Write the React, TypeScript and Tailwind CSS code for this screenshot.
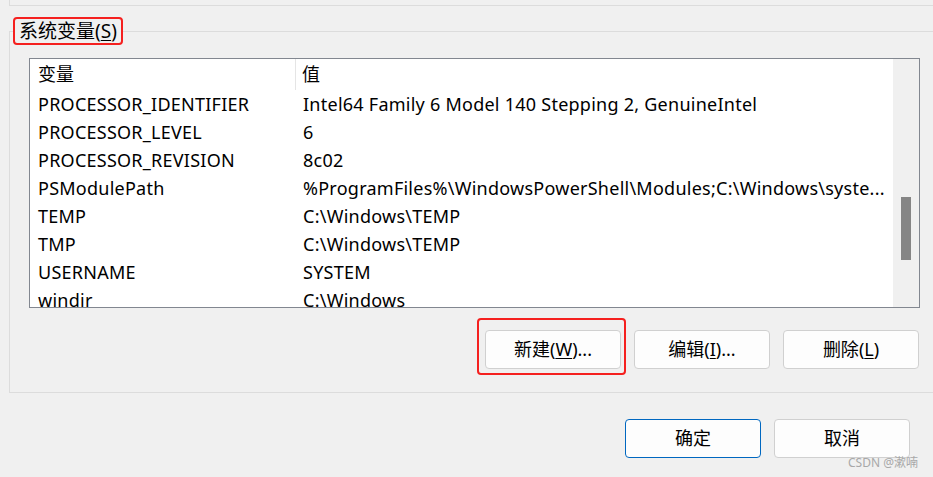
import React from 'react';

const ROWS: [string, string][] = [
  ['PROCESSOR_IDENTIFIER', 'Intel64 Family 6 Model 140 Stepping 2, GenuineIntel'],
  ['PROCESSOR_LEVEL', '6'],
  ['PROCESSOR_REVISION', '8c02'],
  ['PSModulePath', '%ProgramFiles%\\WindowsPowerShell\\Modules;C:\\Windows\\syste...'],
  ['TEMP', 'C:\\Windows\\TEMP'],
  ['TMP', 'C:\\Windows\\TEMP'],
  ['USERNAME', 'SYSTEM'],
  ['windir', 'C:\\Windows'],
];

const font = { fontFamily: '"Noto Sans", "Noto Sans CJK SC", sans-serif' };

function Btn({ label, hot, suffix, primary }: { label: string; hot: string; suffix?: string; primary?: boolean }) {
  return (
    <button
      className={`w-[136px] h-[39px] rounded-[4px] bg-[#fdfdfd] text-[18px] text-black flex items-center justify-center border ${
        primary ? 'border-[#0067c0]' : 'border-[#d0d0d0]'
      }`}
    >
      <span>
        {label}(<span className="underline underline-offset-2">{hot}</span>){suffix}
      </span>
    </button>
  );
}

export default function App() {
  return (
    <div className="w-[933px] h-[477px] bg-[#f0f0f0] overflow-hidden relative text-black" style={font}>
      {/* upper group box (cut off) */}
      <div className="ml-[9px] h-[6px] border-l border-b border-[#dcdcdc]" />

      {/* system variables group */}
      <div className="relative ml-[9px] mt-[25px] h-[362px] border-l border-t border-b border-[#dcdcdc] pl-[19px] pt-[26px]">
        <div className="absolute -top-[14px] left-[4px] px-[5px] bg-[#f0f0f0] text-[19px] leading-[26px]">
          系统变量(<span className="underline underline-offset-2">S</span>)
          <div className="absolute -left-[1px] -right-[1px] -top-[1px] -bottom-[1px] border-2 border-[#f5201f] rounded-[4px]" />
        </div>

        {/* list view */}
        <div className="w-[891px] h-[250px] border border-[#828790] bg-white flex overflow-hidden">
          <div className="flex-1 flex flex-col">
            <div className="h-[31px] flex items-center shrink-0 text-[18px]">
              <div className="w-[266px] h-full pl-[8px] flex items-center border-r border-[#e5e5e5]">变量</div>
              <div className="pl-[6px]">值</div>
            </div>
            {ROWS.map(([k, v]) => (
              <div key={k} className="h-[28px] shrink-0 flex items-center text-[18px] tracking-[0.25px] whitespace-nowrap">
                <div className="w-[267px] pl-[8px]">{k}</div>
                <div className="pl-[6px]">{v}</div>
              </div>
            ))}
          </div>
          <div className="w-[27px] bg-[#f0f0f0] border-l border-white flex flex-col pl-[8px] pt-[138px]">
            <div className="w-[10px] h-[63px] bg-[#858585]" />
          </div>
        </div>

        <div className="flex justify-end gap-[13px] mt-[22px] w-[891px] pr-[1px]">
          <div className="relative">
            <Btn label="新建" hot="W" suffix="..." />
            <div className="absolute -left-[8px] -right-[5px] -top-[12px] -bottom-[6px] border-2 border-[#f5201f] rounded-[4px]" />
          </div>
          <Btn label="编辑" hot="I" suffix="..." />
          <Btn label="删除" hot="L" />
        </div>
      </div>

      <div className="flex justify-end gap-[13px] mt-[26px] pr-[23px]">
        <button className="w-[136px] h-[39px] rounded-[4px] bg-[#fdfdfd] text-[18px] border border-[#0067c0]">确定</button>
        <button className="w-[136px] h-[39px] rounded-[4px] bg-[#fdfdfd] text-[18px] border border-[#d0d0d0]">取消</button>
      </div>

      <div className="absolute right-[15px] bottom-[8px] text-[12px] text-[#a8a8a8] leading-none">CSDN @漱喃</div>
    </div>
  );
}
